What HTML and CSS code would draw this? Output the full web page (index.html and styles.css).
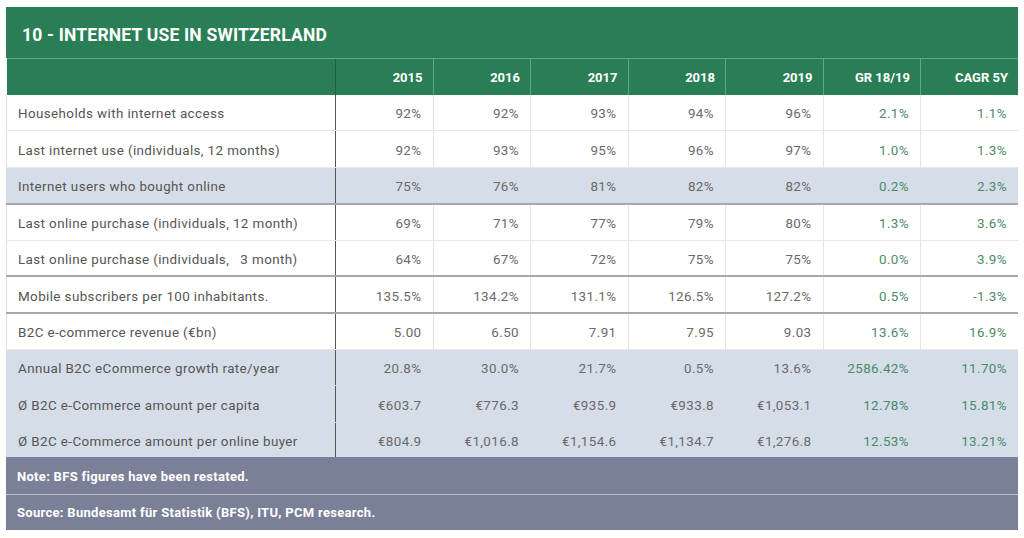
FILE: index.html
```html
<!DOCTYPE html>
<html>
<head>
<meta charset="utf-8">
<link rel="stylesheet" href="styles.css">
</head>
<body>
<div class="wrap">
  <div class="title">10 - INTERNET USE IN SWITZERLAND</div>
  <table class="data">
    <colgroup>
      <col class="c-label"><col><col><col><col><col><col><col>
    </colgroup>
    <thead>
      <tr><th class="label"></th><th>2015</th><th>2016</th><th>2017</th><th>2018</th><th>2019</th><th>GR 18/19</th><th>CAGR 5Y</th></tr>
    </thead>
    <tbody>
      <tr class="light">
        <td class="label">Households with internet access</td><td>92%</td><td>92%</td><td>93%</td><td>94%</td><td>96%</td><td class="g">2.1%</td><td class="g">1.1%</td></tr>
      <tr class="light">
        <td class="label">Last internet use (individuals, 12 months)</td><td>92%</td><td>93%</td><td>95%</td><td>96%</td><td>97%</td><td class="g">1.0%</td><td class="g">1.3%</td></tr>
      <tr class="blue dark">
        <td class="label">Internet users who bought online</td><td>75%</td><td>76%</td><td>81%</td><td>82%</td><td>82%</td><td class="g">0.2%</td><td class="g">2.3%</td></tr>
      <tr class="light">
        <td class="label">Last online purchase (individuals, 12 month)</td><td>69%</td><td>71%</td><td>77%</td><td>79%</td><td>80%</td><td class="g">1.3%</td><td class="g">3.6%</td></tr>
      <tr class="dark">
        <td class="label">Last online purchase (individuals, &nbsp;&nbsp;3 month)</td><td>64%</td><td>67%</td><td>72%</td><td>75%</td><td>75%</td><td class="g">0.0%</td><td class="g">3.9%</td></tr>
      <tr class="dark">
        <td class="label">Mobile subscribers per 100 inhabitants.</td><td>135.5%</td><td>134.2%</td><td>131.1%</td><td>126.5%</td><td>127.2%</td><td class="g">0.5%</td><td class="g">-1.3%</td></tr>
      <tr>
        <td class="label">B2C e-commerce revenue (€bn)</td><td>5.00</td><td>6.50</td><td>7.91</td><td>7.95</td><td>9.03</td><td class="g">13.6%</td><td class="g">16.9%</td></tr>
      <tr class="blue">
        <td class="label">Annual B2C eCommerce growth rate/year</td><td>20.8%</td><td>30.0%</td><td>21.7%</td><td>0.5%</td><td>13.6%</td><td class="g">2586.42%</td><td class="g">11.70%</td></tr>
      <tr class="blue">
        <td class="label">Ø B2C e-Commerce amount per capita</td><td>€603.7</td><td>€776.3</td><td>€935.9</td><td>€933.8</td><td>€1,053.1</td><td class="g">12.78%</td><td class="g">15.81%</td></tr>
      <tr class="blue last">
        <td class="label">Ø B2C e-Commerce amount per online buyer</td><td>€804.9</td><td>€1,016.8</td><td>€1,154.6</td><td>€1,134.7</td><td>€1,276.8</td><td class="g">12.53%</td><td class="g">13.21%</td></tr>
    </tbody>
  </table>
  <div class="note">Note: BFS figures have been restated.</div>
  <div class="note source">Source: Bundesamt für Statistik (BFS), ITU, PCM research.</div>
</div>
</body>
</html>
```

FILE: styles.css
```css
html, body {
  margin: 0;
  padding: 0;
  background: #ffffff;
}
body {
  padding: 7px 6px 0 6px;
  font-family: Roboto, "Liberation Sans", sans-serif;
}
.wrap {
  width: 1012px;
}
.title {
  background: #2a7e56;
  color: #ffffff;
  font-weight: 700;
  font-size: 17.5px;
  height: 51px;
  line-height: 57px;
  padding-left: 16px;
  letter-spacing: 0.2px;
  box-sizing: border-box;
}
.data {
  width: 1012px;
  border-collapse: collapse;
  table-layout: fixed;
}
.c-label {
  width: 329px;
}
.data th {
  background: #2a7e56;
  color: #ffffff;
  font-weight: 700;
  font-size: 13px;
  text-align: right;
  padding: 2px 10px 0 0;
  height: 36px;
  box-sizing: border-box;
  border-left: 1px solid #64a883;
  border-top: 1px solid #64a883;
}
.data th.label {
  border-left: none;
}
.data th:nth-child(2) {
  border-left: 1px solid #1f5f40;
}
.data td {
  font-size: 13.4px;
  color: #6a6a6a;
  text-align: right;
  padding: 3px 11px 0 0;
  height: 36.4px;
  box-sizing: border-box;
  letter-spacing: 0.4px;
  border-left: 1px solid #e4e4e4;
  border-bottom: 1px solid #e8e8e8;
  background: #ffffff;
}
.data td.label {
  text-align: left;
  padding-left: 11px;
  color: #555555;
  border-left: 1px solid #e4e4e4;
  border-right: 1px solid #555555;
}
.data td.g {
  color: #4c8a6a;
}
.data tr.dark td {
  border-bottom: 2px solid #a8a8a8;
}
.data tr.blue td {
  background: #d5dde8;
  border-left-color: #d5dde8;
  border-bottom-color: #d5dde8;
}
.data tr.blue td.label {
  border-right: 1px solid #555555;
}
.data tr.blue.dark td {
  border-bottom: 2px solid #a8a8a8;
}
.data tr.last td {
  border-bottom: 2px solid #7b8099;
}
.note {
  background: #7b8099;
  color: #ffffff;
  font-weight: 700;
  font-size: 13px;
  height: 35px;
  line-height: 36px;
  padding-left: 11px;
  letter-spacing: 0.3px;
}
.source {
  border-top: 1px solid #b8bccb;
}
```
